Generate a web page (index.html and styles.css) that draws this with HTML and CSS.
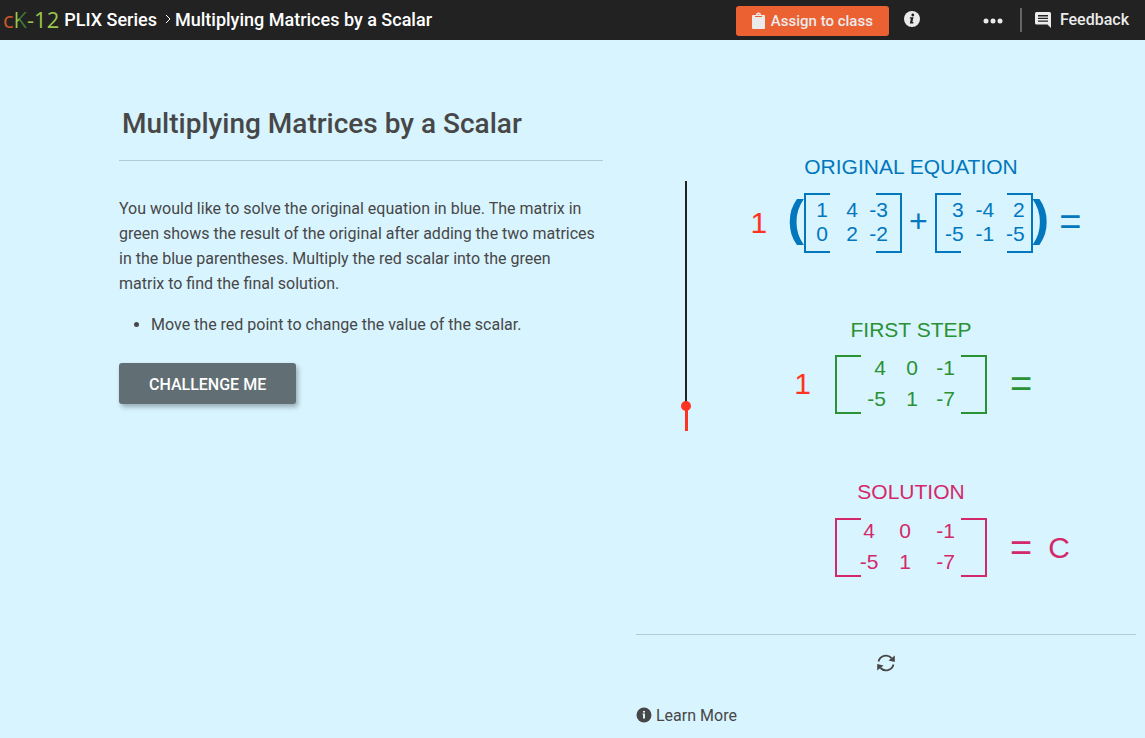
FILE: index.html
```html
<!DOCTYPE html>
<html lang="en">
<head>
    <meta charset="UTF-8">
    <meta name="viewport" content="width=device-width, initial-scale=1.0">
    <title>Multiplying Matrices by a Scalar</title>
    <link rel="stylesheet" href="styles.css">
</head>
<body>
    <header class="topbar">
        <a href="#" class="logo"><span class="logo-c">c</span><span class="logo-k">K</span><span class="logo-num">-12</span></a>
        <a href="#" class="crumb">PLIX Series</a>
        <svg class="chevron" viewBox="0 0 6 10" fill="none" stroke="currentColor"><path d="M1 1l4 4-4 4" /></svg>
        <span class="crumb">Multiplying Matrices by a Scalar</span>

        <div class="actions">
            <button type="button" class="assign">
                <svg viewBox="0 0 13 16" width="13" height="16" fill="currentColor">
                    <path fill-rule="evenodd" d="M1 2h3a2.500 2.500 0 0 1 5 0h3a1 1 0 0 1 1 1v12a1 1 0 0 1-1 1H1a1 1 0 0 1-1-1V3a1 1 0 0 1 1-1zM3 3v1h7V3zM5.700 2h1.600V1.200H5.700z" />
                </svg>
                Assign to class
            </button>
            <button type="button" class="icon-btn info" aria-label="Information">
                <svg viewBox="0 0 16 16" width="16" height="16">
                    <circle cx="8" cy="8" r="8" fill="currentColor" />
                    <circle cx="8.800" cy="4" r="1.400" fill="#222" />
                    <path fill="#222" d="M6 6.300h3.500l-1.100 4.800h1.100l-.3 1.300H5.800l1.100-4.800H5.700z" />
                </svg>
            </button>
            <button type="button" class="icon-btn more" aria-label="More options">
                <svg viewBox="0 0 20 6" width="20" height="6" fill="currentColor">
                    <circle cx="3" cy="3" r="2.500" /><circle cx="10" cy="3" r="2.500" /><circle cx="17" cy="3" r="2.500" />
                </svg>
            </button>
            <button type="button" class="feedback">
                <svg viewBox="0 0 16 16" width="16" height="16">
                    <path fill="currentColor" d="M1.500 0h13A1.500 1.500 0 0 1 16 1.500V16l-3.500-3.500h-11A1.500 1.500 0 0 1 0 11V1.500A1.500 1.500 0 0 1 1.500 0z" />
                    <path stroke="#222" stroke-width="1.400" d="M3 3.700h10M3 6.400h10M3 9.100h10" />
                </svg>
                Feedback
            </button>
        </div>
    </header>

    <main class="page">
        <section class="intro">
            <h1>Multiplying Matrices by a Scalar</h1>
            <p>You would like to solve the original equation in blue. The matrix in green shows the result of the original after adding the two matrices in the blue parentheses. Multiply the red scalar into the green matrix to find the final solution.</p>
            <ul>
                <li>Move the red point to change the value of the scalar.</li>
            </ul>
            <button type="button" class="challenge">CHALLENGE ME</button>
        </section>

        <section class="activity">
            <div class="board">
                <input type="range" class="scalar-slider" min="0" max="10" value="1" aria-label="Scalar">

                <div class="equations">
                    <div class="equation original">
                        <h2>ORIGINAL EQUATION</h2>
                        <div class="sum">
                            <span class="scalar">1</span>
                            <span class="paren">(</span>
                            <div class="matrix">
                                <table>
                                    <tr><td>1</td><td>4</td><td>-3</td></tr>
                                    <tr><td>0</td><td>2</td><td>-2</td></tr>
                                </table>
                            </div>
                            <span class="plus">+</span>
                            <div class="matrix second">
                                <table>
                                    <tr><td>3</td><td>-4</td><td>2</td></tr>
                                    <tr><td>-5</td><td>-1</td><td>-5</td></tr>
                                </table>
                            </div>
                            <span class="paren">)</span>
                            <span class="equals">=</span>
                        </div>
                    </div>

                    <div class="equation first-step">
                        <h2>FIRST STEP</h2>
                        <div class="result">
                            <span class="scalar">1</span>
                            <div class="matrix wide">
                                <table>
                                    <tr><td>4</td><td>0</td><td>-1</td></tr>
                                    <tr><td>-5</td><td>1</td><td>-7</td></tr>
                                </table>
                            </div>
                            <div class="after"><span class="equals">=</span></div>
                        </div>
                    </div>

                    <div class="equation solution">
                        <h2>SOLUTION</h2>
                        <div class="result">
                            <span></span>
                            <div class="matrix wide">
                                <table>
                                    <tr><td>4</td><td>0</td><td>-1</td></tr>
                                    <tr><td>-5</td><td>1</td><td>-7</td></tr>
                                </table>
                            </div>
                            <div class="after"><span class="equals">=</span><span class="name">C</span></div>
                        </div>
                    </div>
                </div>
            </div>

            <div class="toolbar">
                <button type="button" class="icon-btn refresh" aria-label="Reset">
                    <svg viewBox="0 0 18 18" width="18" height="18">
                        <path fill="none" stroke="currentColor" stroke-width="1.800" d="M1.500 7.500A7.700 7.700 0 0 1 14.500 4M16.500 10.500A7.700 7.700 0 0 1 3.500 14" />
                        <path fill="currentColor" d="M17.800 1.500v6.500l-6.300-1.500zM.2 16.500V10l6.300 1.500z" />
                    </svg>
                </button>
            </div>

            <a href="#" class="learn-more">
                <svg viewBox="0 0 16 16" width="16" height="16">
                    <circle cx="8" cy="7" r="7.500" fill="currentColor" />
                    <path fill="#d8f4ff" d="M7 3h2v1.600H7zM6.500 5.600H9v4.800H7V6.500h-.5z" />
                </svg>
                Learn More
            </a>
        </section>
    </main>
</body>
</html>
```
FILE: styles.css
```css
:root {
    --bar: #222;
    --page: #d8f4ff;
    --text: #474747;
    --rule: #b3cbd4;
    --orange: #eb6132;
    --red: #ff3322;
    --blue: #0277bd;
    --green: #2a9134;
    --pink: #d3296b;
}

*,
*::before,
*::after {
    box-sizing: border-box;
    margin: 0;
    padding: 0;
}

body {
    background: var(--page);
    color: var(--text);
    font-family: Roboto, sans-serif;
    font-size: 16px;
}

button {
    font: inherit;
    border: none;
    background: none;
    color: inherit;
    cursor: pointer;
}

a {
    color: inherit;
    text-decoration: none;
}

svg {
    display: block;
    flex: none;
    overflow: visible;
}

/* top bar */
.topbar {
    display: flex;
    align-items: center;
    height: 40px;
    padding: 0 16px 2px 3px;
    background: var(--bar);
    color: #fff;
}

.logo {
    margin-right: 5px;
    font-family: "Open Sans", sans-serif;
    font-size: 22px;
    line-height: 38px;
}

.logo-c {
    color: #d2562a;
}

.logo-k {
    background: linear-gradient(90deg, #9cc54d 35%, #3c7a35 45%);
    background-clip: text;
    -webkit-background-clip: text;
    color: transparent;
}

.logo-num {
    color: #9cc54d;
}

.crumb {
    font-size: 18px;
    font-weight: 500;
    white-space: nowrap;
}

.chevron {
    width: 6px;
    height: 10px;
    margin: 0 4px 0 8px;
}

.actions {
    display: flex;
    align-items: center;
    margin-left: auto;
    color: #ebebeb;
    font-weight: 500;
}

.assign {
    display: flex;
    align-items: center;
    gap: 6px;
    height: 30px;
    padding: 0 16px;
    margin-top: 3px;
    border-radius: 3px;
    background: var(--orange);
    font-size: 15px;
    white-space: nowrap;
}

.info {
    margin-left: 15px;
}

.more {
    margin: 3px 0 0 63px;
}

.feedback {
    display: flex;
    align-items: center;
    gap: 9px;
    height: 24px;
    margin: 1px 0 0 17px;
    padding-left: 13px;
    border-left: 2px solid #666;
}

/* page columns */
.page {
    display: grid;
    grid-template-columns: 484fr 500fr;
    column-gap: 33px;
    padding: 0 9px 0 119px;
}

.intro h1 {
    padding: 64px 3px 16px;
    border-bottom: 1px solid var(--rule);
    font-size: 28px;
    font-weight: 500;
    line-height: 40px;
}

.intro p {
    margin-top: 35px;
    padding-right: 6px;
    line-height: 25px;
}

.intro ul {
    margin: 16px 0 26px;
    padding-left: 32px;
    line-height: 25px;
}

.challenge {
    height: 41px;
    padding: 1px 30px 0;
    border-radius: 3px;
    background: #616e73;
    box-shadow: 2px 3px 5px rgba(0, 0, 0, 0.3);
    color: #fff;
    font-weight: 500;
}

/* equation board */
.board {
    display: flex;
    align-items: flex-start;
    padding: 115px 8px 56px 42px;
    border-bottom: 1px solid var(--rule);
    font-family: "Liberation Sans", Arial, sans-serif;
}

.scalar-slider {
    appearance: none;
    -webkit-appearance: none;
    writing-mode: vertical-lr;
    direction: rtl;
    flex: none;
    width: 16px;
    height: 260px;
    margin-top: 21px;
    background:
        linear-gradient(var(--red), var(--red)) center bottom 5px / 3px 25px no-repeat,
        linear-gradient(#222, #222) center top 5px / 2px 225px no-repeat;
}

.scalar-slider::-webkit-slider-thumb {
    -webkit-appearance: none;
    width: 10px;
    height: 10px;
    border-radius: 50%;
    background: var(--red);
}

.equations {
    flex: 1;
    display: flex;
    flex-direction: column;
    gap: 65px;
}

.equation h2 {
    font-size: 21px;
    font-weight: 400;
    line-height: 24px;
    text-align: center;
}

.original {
    color: var(--blue);
}

.first-step {
    color: var(--green);
}

.solution {
    color: var(--pink);
}

.sum {
    display: flex;
    justify-content: center;
    height: 60px;
    margin-top: 14px;
    padding-left: 10px;
    line-height: 60px;
}

.result {
    display: grid;
    grid-template-columns: 1fr 152px 1fr;
    align-items: start;
    height: 63px;
    margin-top: 10px;
    line-height: 64px;
}

.matrix {
    position: relative;
    width: 98px;
    padding: 5px 0;
}

.matrix::before,
.matrix::after {
    content: '';
    position: absolute;
    top: 0;
    bottom: 0;
    width: 26px;
    border: 2px solid currentColor;
}

.matrix::before {
    left: 0;
    border-right: none;
}

.matrix::after {
    right: 0;
    border-left: none;
}

.matrix table {
    border-collapse: collapse;
    table-layout: fixed;
    width: 84px;
    font-size: 21px;
    line-height: 24px;
    text-align: right;
}

.matrix td:first-child {
    width: 24px;
}

.matrix.second table {
    width: 90px;
}

.matrix.second td:first-child {
    width: 29px;
}

.matrix.wide {
    width: auto;
    padding: 0;
}

.matrix.wide::before,
.matrix.wide::after {
    top: 3px;
}

.matrix.wide table {
    width: 120px;
    line-height: 31px;
}

.matrix.wide td:first-child {
    width: 51px;
}

.matrix.wide td:nth-child(2) {
    width: 32px;
}

.solution .matrix.wide td:first-child {
    width: 44px;
    padding-left: 24px;
    text-align: center;
}

.scalar,
.name {
    font-size: 30px;
}

.scalar {
    color: var(--red);
}

.sum .scalar {
    margin-right: 20px;
}

.result .scalar {
    margin-right: 24px;
    text-align: right;
}

.paren {
    font-size: 50px;
    font-weight: 700;
    line-height: 50px;
}

.plus {
    margin: 0 7px;
    font-size: 32px;
    line-height: 56px;
}

.equals {
    font-size: 38px;
}

.sum .equals {
    margin-left: 10px;
    line-height: 58px;
}

.after {
    display: flex;
    padding-left: 23px;
}

.name {
    margin-left: 16px;
}

.solution .result {
    margin-top: 11px;
}

.solution .after {
    line-height: 66px;
}

/* below the board */
.toolbar {
    display: flex;
    justify-content: center;
    padding: 19px 0 34px;
}

.learn-more {
    display: inline-flex;
    align-items: center;
    gap: 4px;
    line-height: 20px;
}
```
